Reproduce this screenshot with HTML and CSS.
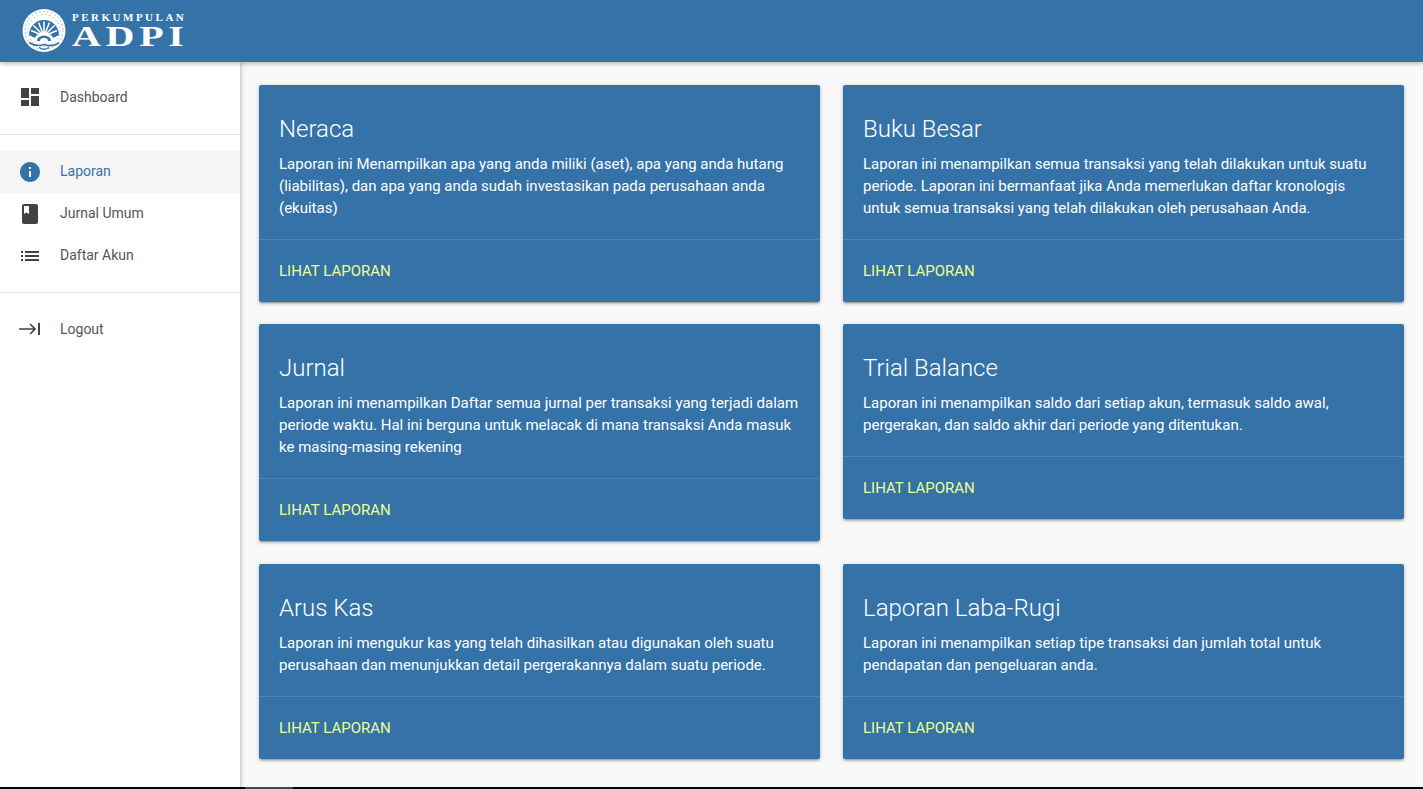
FILE: index.html
```html
<!DOCTYPE html>
<html lang="id">
<head>
<meta charset="utf-8">
<title>ADPI</title>
<link rel="stylesheet" href="styles.css">
</head>
<body>
<header class="topbar">
  <div class="logo">
    <svg class="emblem" width="44" height="45" viewBox="0 0 44 45">
      <circle cx="22" cy="22.500" r="21.500" fill="#fff"/>
      <circle cx="22" cy="22.500" r="19" fill="none" stroke="#3572a7" stroke-width="1" stroke-dasharray="1.500 2.500" opacity=".55"/>
      <circle cx="22" cy="22.500" r="16" fill="none" stroke="#3572a7" stroke-width="1" stroke-dasharray="1 3" opacity=".6"/>
      <path d="M7 27a15 15 0 0 1 30 0l-6 3H13z" fill="#3572a7"/>
      <g stroke="#fff" stroke-width="1.500" fill="none">
        <path d="M22 28V13.500M22 28L16.500 14.500M22 28L27.500 14.500M22 28L11.500 17.500M22 28L32.500 17.500M22 28L9 22.500M22 28L35 22.500"/>
      </g>
      <path d="M12 33a10 8.500 0 0 1 20 0l-3 1.500a7.500 6 0 0 0-14 0z" fill="#fff"/>
      <path d="M15 33a7 5.500 0 0 1 14 0z" fill="#3572a7"/>
      <path d="M18 33a4 3 0 0 1 8 0z" fill="#fff"/>
      <path d="M7 34.500c6 4 11 3.500 15 2 4 1.500 9 2 15-1.500" stroke="#3572a7" stroke-width="1.600" fill="none"/>
      <path d="M17 39.500c3 2 7 2 10 0" stroke="#3572a7" stroke-width="1.400" fill="none"/>
    </svg>
    <div class="wordmark">
      <span class="word-small">PERKUMPULAN</span>
      <span class="word-big">ADPI</span>
    </div>
  </div>
</header>
<div class="shell">
  <nav class="sidebar">
    <ul class="menu menu-top">
      <li class="item"><svg class="icon" viewBox="0 0 24 24"><path d="M3 13h8V3H3v10zm0 8h8v-6H3v6zm10 0h8V11h-8v10zm0-18v6h8V3h-8z"/></svg><span class="label">Dashboard</span></li>
    </ul>
    <ul class="menu menu-mid">
      <li class="item active"><svg class="icon" viewBox="0 0 24 24"><path d="M12 2C6.480 2 2 6.480 2 12s4.480 10 10 10 10-4.480 10-10S17.520 2 12 2zm1 15h-2v-6h2v6zm0-8h-2V7h2v2z"/></svg><span class="label">Laporan</span></li>
      <li class="item"><svg class="icon" viewBox="0 0 24 24"><path d="M18 2H6c-1.100 0-2 .9-2 2v16c0 1.100.9 2 2 2h12c1.100 0 2-.9 2-2V4c0-1.100-.9-2-2-2zM6 4h5v8l-2.500-1.500L6 12V4z"/></svg><span class="label">Jurnal Umum</span></li>
      <li class="item"><svg class="icon" viewBox="0 0 24 24"><path d="M3 13h2v-2H3v2zm0 4h2v-2H3v2zm0-8h2V7H3v2zm4 4h14v-2H7v2zm0 4h14v-2H7v2zM7 7v2h14V7H7z"/></svg><span class="label">Daftar Akun</span></li>
    </ul>
    <ul class="menu menu-end">
      <li class="item"><svg class="icon" viewBox="0 0 24 24"><path d="M1 11.200h14.200l-3.600-3.600 1.100-1.100 5.500 5.500-5.500 5.500-1.100-1.100 3.600-3.600H1z"/><path d="M20 6h2v12h-2z"/></svg><span class="label">Logout</span></li>
    </ul>
  </nav>
  <main class="content">
    <article class="card">
      <div class="card-body"><h2 class="card-title">Neraca</h2><p class="card-text">Laporan ini Menampilkan apa yang anda miliki (aset), apa yang anda hutang (liabilitas), dan apa yang anda sudah investasikan pada perusahaan anda (ekuitas)</p></div>
      <div class="card-action"><a class="card-link">LIHAT LAPORAN</a></div>
    </article>
    <article class="card">
      <div class="card-body"><h2 class="card-title">Buku Besar</h2><p class="card-text">Laporan ini menampilkan semua transaksi yang telah dilakukan untuk suatu periode. Laporan ini bermanfaat jika Anda memerlukan daftar kronologis untuk semua transaksi yang telah dilakukan oleh perusahaan Anda.</p></div>
      <div class="card-action"><a class="card-link">LIHAT LAPORAN</a></div>
    </article>
    <article class="card">
      <div class="card-body"><h2 class="card-title">Jurnal</h2><p class="card-text">Laporan ini menampilkan Daftar semua jurnal per transaksi yang terjadi dalam periode waktu. Hal ini berguna untuk melacak di mana transaksi Anda masuk ke masing-masing rekening</p></div>
      <div class="card-action"><a class="card-link">LIHAT LAPORAN</a></div>
    </article>
    <article class="card">
      <div class="card-body"><h2 class="card-title">Trial Balance</h2><p class="card-text">Laporan ini menampilkan saldo dari setiap akun, termasuk saldo awal, pergerakan, dan saldo akhir dari periode yang ditentukan.</p></div>
      <div class="card-action"><a class="card-link">LIHAT LAPORAN</a></div>
    </article>
    <article class="card">
      <div class="card-body"><h2 class="card-title">Arus Kas</h2><p class="card-text">Laporan ini mengukur kas yang telah dihasilkan atau digunakan oleh suatu perusahaan dan menunjukkan detail pergerakannya dalam suatu periode.</p></div>
      <div class="card-action"><a class="card-link">LIHAT LAPORAN</a></div>
    </article>
    <article class="card">
      <div class="card-body"><h2 class="card-title">Laporan Laba-Rugi</h2><p class="card-text">Laporan ini menampilkan setiap tipe transaksi dan jumlah total untuk pendapatan dan pengeluaran anda.</p></div>
      <div class="card-action"><a class="card-link">LIHAT LAPORAN</a></div>
    </article>
  </main>
</div>
<div class="edge"><span class="edge-thumb"></span></div>
</body>
</html>
```
FILE: styles.css
```css
* { box-sizing: border-box; }
html, body { margin: 0; height: 100%; overflow: hidden; }
body {
  position: relative;
  display: flex;
  flex-direction: column;
  font-family: Roboto, "Liberation Sans", sans-serif;
  background: #f9f9f9;
}
.topbar {
  height: 62px;
  flex: none;
  background: #3572a7;
  box-shadow: 0 2px 4px rgba(0,0,0,.25);
  position: relative;
  z-index: 2;
  padding: 8px 0 0 22px;
}
.logo { display: flex; align-items: flex-start; gap: 6px; }
.emblem { flex: none; }
.wordmark { display: flex; flex-direction: column; color: #fff; font-family: "Liberation Serif", serif; font-weight: 700; padding-top: 4px; }
.word-small { font-size: 11px; line-height: 10px; letter-spacing: 2.5px; }
.word-big { font-size: 29px; line-height: 28px; letter-spacing: 3.4px; transform: scaleX(1.38); transform-origin: left center; }
.shell { flex: 1; display: flex; min-height: 0; }
.sidebar {
  width: 240px;
  flex: none;
  background: #fff;
  box-shadow: 1px 0 4px rgba(0,0,0,.25);
  position: relative;
  z-index: 1;
  padding-top: 14px;
}
.menu { list-style: none; margin: 0; padding: 0; border-bottom: 1px solid #e0e0e0; }
.menu-top { padding-bottom: 16px; margin-bottom: 16px; }
.menu-mid { padding-bottom: 15px; margin-bottom: 15px; }
.menu-mid .label { margin-bottom: 2px; }
.menu-end { border-bottom: 0; }
.item {
  height: 42px;
  display: flex;
  align-items: center;
  gap: 18px;
  padding-left: 18px;
  font-size: 14px;
  color: #555;
}
.icon { width: 24px; height: 24px; fill: #424242; flex: none; overflow: visible; }
.active { background: #f5f5f5; color: #3572a7; }
.active .icon { fill: #3572a7; }
.content {
  flex: 1;
  min-width: 0;
  display: grid;
  grid-template-columns: 561px 561px;
  column-gap: 23px;
  row-gap: 22.4px;
  align-items: start;
  align-content: start;
  padding: 23px 0 0 19px;
}
.card {
  background: #3572a7;
  border-radius: 2px;
  color: #fff;
  box-shadow: 0 2px 2px 0 rgba(0,0,0,.14), 0 3px 1px -2px rgba(0,0,0,.12), 0 1px 5px 0 rgba(0,0,0,.2);
}
.card-body { padding: 28px 20px 20px; }
.card-title { margin: 0 0 8px; font-size: 24px; line-height: 32px; font-weight: 300; }
.card-text { margin: 0; font-size: 15px; line-height: 22px; }
.card-action { padding: 20px; border-top: 1px solid rgba(255,255,255,.12); }
.card-link { display: block; font-size: 15px; line-height: 22px; font-weight: 400; color: #eeff8f; }
.edge { position: absolute; left: 0; right: 0; bottom: 0; height: 2px; background: #000; z-index: 3; }
.edge-thumb { position: absolute; left: 245px; width: 48px; top: 0; height: 2px; background: #444; }
```
